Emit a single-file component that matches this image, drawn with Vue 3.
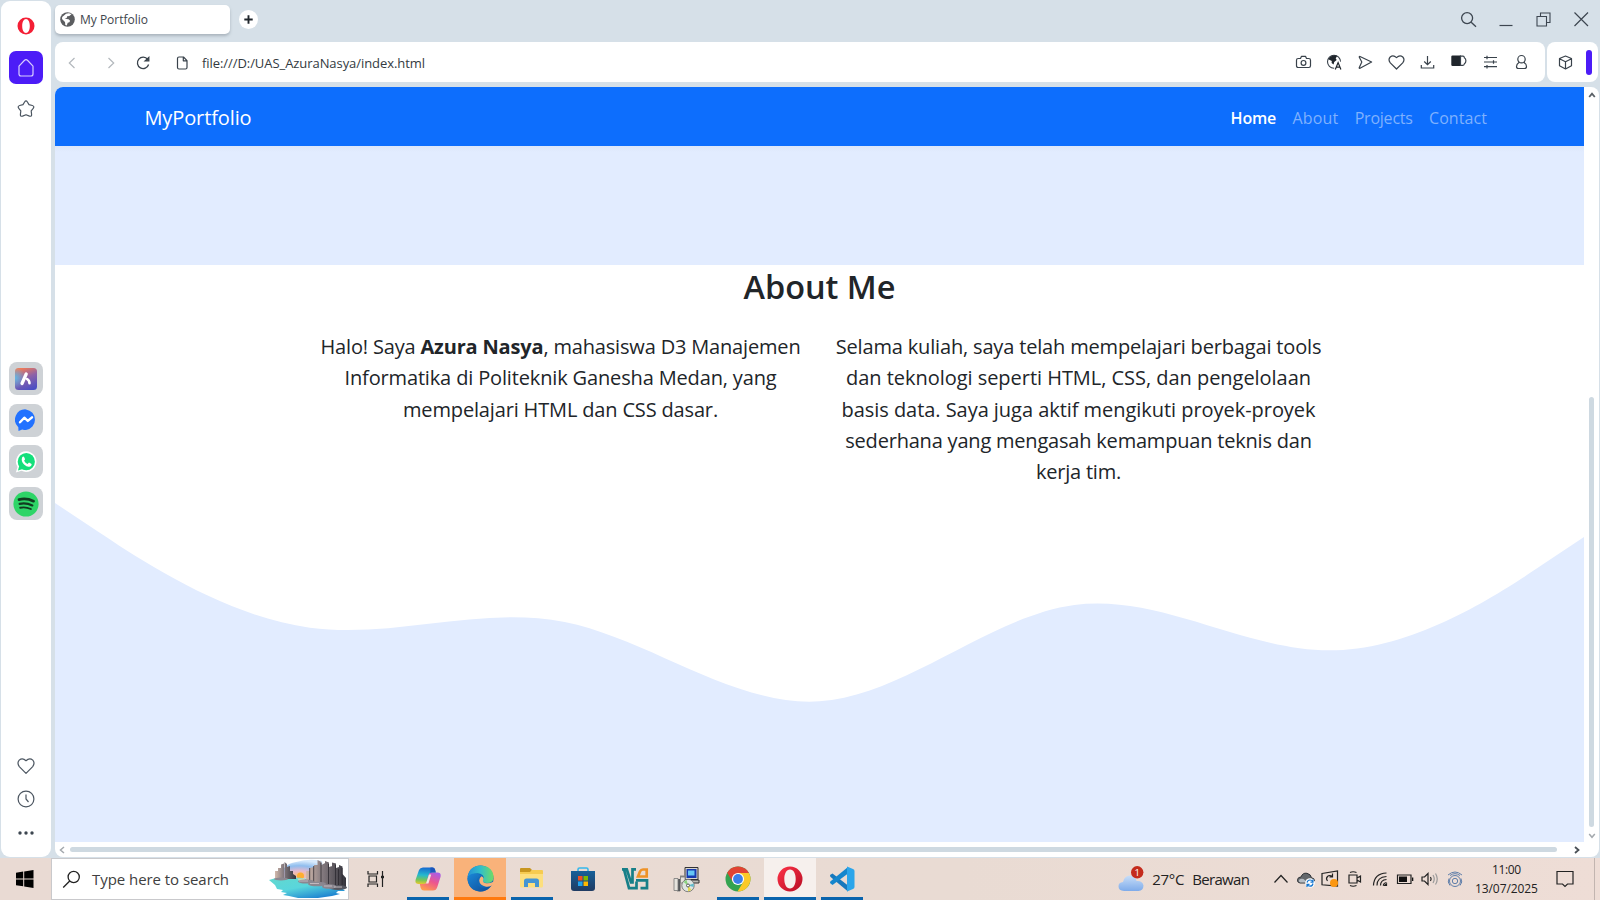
<script setup>
// Spreads a single line of text to an exact width in pixels by adjusting its letter spacing.
const vFit = {
  mounted(el, { value }) {
    const width = el.getBoundingClientRect().width
    const count = el.textContent.length
    el.style.letterSpacing = ((value - width) / count).toFixed(4) + 'px'
  }
}

const links = [
  { text: 'Home', width: 45.5, active: true },
  { text: 'About', width: 46 },
  { text: 'Projects', width: 58 },
  { text: 'Contact', width: 58 }
]

const right = [
  { text: 'Selama kuliah, saya telah mempelajari berbagai tools', width: 485.5 },
  { text: 'dan teknologi seperti HTML, CSS, dan pengelolaan', width: 465 },
  { text: 'basis data. Saya juga aktif mengikuti proyek-proyek', width: 474 },
  { text: 'sederhana yang mengasah kemampuan teknis dan', width: 466.5 },
  { text: 'kerja tim.', width: 85 }
]
</script>

<template>
  <div class="screen">
    <div class="browser">
      <aside class="side">
        <svg class="opera" width="18" height="18" viewBox="0 0 18 18"><path fill="#f41f35" fill-rule="evenodd" d="M9 .5a8.500 8.500 0 1 0 0 17 8.500 8.500 0 0 0 0-17zM9 2c2.300 0 3.800 3 3.800 7s-1.500 7-3.800 7-3.800-3-3.800-7S6.700 2 9 2z"/></svg>
        <div class="home">
          <svg width="20" height="20" viewBox="0 0 20 20" fill="none" stroke="#d8cdff" stroke-width="1.200" stroke-linejoin="round"><path d="M3 8.200 8.300 2.500q1.700-1.600 3.400 0L17 8.200v7.800q0 2-2 2H5q-2 0-2-2z"/></svg>
        </div>
        <svg class="star" width="20" height="20" viewBox="0 0 20 20" fill="none" stroke="#4b5560" stroke-width="1.200" stroke-linejoin="round"><path d="M8.600 3q1.400-2.200 2.800 0l1.600 2.600 3.300.9q2.500.8.9 2.900l-2 2.500.4 3.600q.2 2.300-2.100 1.600L10 15.700l-3.500 1.400q-2.300.7-2.100-1.600l.4-3.600-2-2.500q-1.600-2.100.9-2.900l3.300-.9z"/></svg>
        <div class="apps">
          <div class="app">
            <svg width="22" height="22" viewBox="0 0 22 22"><defs><linearGradient id="aria" x1="0.3" y1="0" x2="0.7" y2="1"><stop offset="0" stop-color="#f27b56"/><stop offset=".45" stop-color="#8d62a8"/><stop offset="1" stop-color="#4a4fc4"/></linearGradient><radialGradient id="ariaGlow" cx="0" cy=".45" r=".5"><stop offset="0" stop-color="#61b8e6"/><stop offset="1" stop-color="#61b8e6" stop-opacity="0"/></radialGradient></defs><rect width="22" height="22" rx="3.500" fill="url(#aria)"/><rect width="22" height="22" rx="3.500" fill="url(#ariaGlow)"/><path d="M11.200 6 7 15.500" stroke="#fff" stroke-width="3.300" stroke-linecap="round"/><path d="M12 11q2.500 1.500 2.500 4.300" stroke="#fff" stroke-width="2.600" stroke-linecap="round" fill="none"/></svg>
          </div>
          <div class="app">
            <svg width="22" height="22" viewBox="0 0 22 22"><path fill="#2272ff" d="M11 .4A10.400 10.400 0 0 1 11 21q-2 0-3.800-.6L3.500 22l-.2-3.800A10.300 10.300 0 0 1 11 .4z"/><path d="m5 13.300 4.300-4.600 3.500 3.200L17 8.300" fill="none" stroke="#fff" stroke-width="2.400" stroke-linecap="round" stroke-linejoin="round"/></svg>
          </div>
          <div class="app">
            <svg width="22" height="22" viewBox="0 0 22 22"><path fill="#fff" d="M11.300.3a10.300 10.300 0 1 1-4.800 19.500L.8 21.500l1.700-5.400A10.400 10.400 0 0 1 11.300.3z"/><circle cx="11.300" cy="10.700" r="8.600" fill="#14df7b"/><path fill="#14df7b" d="m3 19.400 1.300-4.800 3.500 3.500z"/><path fill="#fff" d="M7.200 6.200q1-1 1.900-.3l1 2.400-1 1.500q1.200 2.200 3.400 3.200l1.500-1.400 2.600 1.300q.2 2.300-2.500 2.800-2.300.3-5-2.200-3.500-3.500-1.900-7.300z"/></svg>
          </div>
          <div class="app">
            <svg width="26" height="26" viewBox="0 0 26 26"><circle cx="13" cy="13" r="12.600" fill="#2ed567"/><g fill="none" stroke="#123b20" stroke-linecap="round"><path d="M6 8.600q7.500-1.800 14.600 1.600" stroke-width="2.700"/><path d="M6.600 12.800q6.800-1.300 12.700 1.600" stroke-width="2.200"/><path d="M7.200 16.700q5.700-1.100 10.600 1.300" stroke-width="1.900"/></g></svg>
          </div>
        </div>
        <div class="sidefoot">
          <svg width="18" height="18" viewBox="0 0 18 18" fill="none" stroke="#4b5560" stroke-width="1.200"><path d="M9 16.300 2.300 9.600Q-.3 6 2.200 3.100 5.500.3 9 3.700q3.500-3.400 6.800-.6 2.500 2.900-.1 6.500z" stroke-linejoin="round"/></svg>
          <svg width="18" height="18" viewBox="0 0 18 18" fill="none" stroke="#4b5560" stroke-width="1.200"><circle cx="9" cy="9" r="7.900"/><path d="M9 4.500V9l2.500 3"/></svg>
          <svg width="18" height="18" viewBox="0 0 18 18" fill="#3d4650"><circle cx="3" cy="9" r="1.700"/><circle cx="9" cy="9" r="1.700"/><circle cx="15" cy="9" r="1.700"/></svg>
        </div>
      </aside>

      <div class="main">
        <div class="tabs">
          <div class="tab">
            <svg width="15" height="15" viewBox="0 0 15 15"><circle cx="7.500" cy="7.500" r="7.300" fill="#5b5d60"/><path fill="#fff" d="M6 1.800q3-1.300 5.500.5L9.300 4 7.200 4.300 6.700 6 4.600 6.800l4 .4 1.500 1.500-.7 1.500-1.700.5-.9 2.800-1.500-.5-.3-3L2 7.100 2.200 5z"/></svg>
            <span v-fit="68">My Portfolio</span>
          </div>
          <div class="plus"><svg width="9" height="9" viewBox="0 0 9 9" stroke="#20262c" stroke-width="1.900"><path d="M4.500.3v8.400M.3 4.500h8.400"/></svg></div>
          <div class="window">
            <svg width="17" height="17" viewBox="0 0 17 17" fill="none" stroke="#3d4650" stroke-width="1.300"><circle cx="7.100" cy="7.100" r="5.500"/><path d="m11.200 11.200 4.800 4.600"/></svg>
            <svg width="17" height="17" viewBox="0 0 17 17" fill="none" stroke="#3d4650" stroke-width="1.200"><path d="M1.500 14.500h13"/></svg>
            <svg width="17" height="17" viewBox="0 0 17 17" fill="none" stroke="#3d4650" stroke-width="1.100"><path d="M2 5.500h9.500V15H2zM5.500 5.500V2H15v9.500h-3.500"/></svg>
            <svg width="17" height="17" viewBox="0 0 17 17" fill="none" stroke="#3d4650" stroke-width="1.200"><path d="m1.500 1.500 13.500 13.500m0-13.500-13.500 13.500"/></svg>
          </div>
        </div>

        <div class="bars">
          <div class="address">
            <svg class="back" width="16" height="16" viewBox="0 0 16 16" fill="none" stroke="#b3b8bd" stroke-width="1.200"><path d="M10.500 3 5.300 8l5.200 5"/></svg>
            <svg class="fwd" width="16" height="16" viewBox="0 0 16 16" fill="none" stroke="#b3b8bd" stroke-width="1.200"><path d="m5.500 3 5.200 5-5.200 5"/></svg>
            <svg class="reload" width="16" height="16" viewBox="0 0 16 16" fill="none" stroke="#39424b" stroke-width="1.300"><path d="M13.600 9.500A5.700 5.700 0 1 1 12.700 4.500"/><path d="M13.800 2.500v3.300h-3.600z" fill="#39424b"/></svg>
            <svg class="file" width="14" height="16" viewBox="0 0 14 16" fill="none" stroke="#39424b" stroke-width="1.200" stroke-linejoin="round"><path d="M4 2h4.500L12 5.600v6.900q0 1.500-1.500 1.500H4q-1.500 0-1.500-1.500v-9Q2.500 2 4 2zM8.300 2v3.800H12"/></svg>
            <span v-fit="223">file:///D:/UAS_AzuraNasya/index.html</span>
            <div class="tools">
              <svg width="17" height="17" viewBox="0 0 17 17" fill="none" stroke="#39424b" stroke-width="1.200" stroke-linejoin="round"><path d="M3.200 4.500h2.300L6.500 2.300h4L11.500 4.500h2.300q1.700 0 1.700 1.700v5.600q0 1.700-1.700 1.700H3.200q-1.700 0-1.700-1.700V6.200Q1.500 4.500 3.200 4.500z"/><circle cx="8.500" cy="8.900" r="2.400"/></svg>
              <svg width="17" height="17" viewBox="0 0 17 17"><circle cx="8" cy="7.700" r="6.500" fill="#fff" stroke="#39424b" stroke-width="1.100"/><path fill="#20262c" d="M4 3q3.500-3 7.200-1.200L9.700 4.500l1 1.500-2.500 2-.6 2.600-2-1.500.2-2.100L2.300 5.200z"/><path d="M8.200 17V9l4-3.500L17 10v7z" fill="#fff"/><path d="m9.300 15.500 2.800-7 2.800 7m-4.600-2.300h3.600" fill="none" stroke="#20262c" stroke-width="1.200"/></svg>
              <svg width="17" height="17" viewBox="0 0 17 17" fill="none" stroke="#39424b" stroke-width="1.200" stroke-linejoin="round"><path d="M3 2.500 14.600 8 3 14.300q-1.200.3-.7-.9L4.800 8 2.300 3.300Q2 2.200 3 2.500z"/></svg>
              <svg width="17" height="17" viewBox="0 0 17 17" fill="none" stroke="#39424b" stroke-width="1.200" stroke-linejoin="round"><path d="M8.500 15 2.300 8.900Q-.2 5.700 2.200 3 5.300.5 8.500 3.600q3.200-3.100 6.300-.6 2.400 2.700-.1 5.900z"/></svg>
              <svg width="17" height="17" viewBox="0 0 17 17" fill="none" stroke="#39424b" stroke-width="1.200"><path d="M8.500 2v8.500m-3.300-3 3.300 3.200 3.300-3.200M2.300 11v3h12.400v-3"/></svg>
              <svg width="17" height="17" viewBox="0 0 17 17"><path fill="#20262c" d="M1.500 1.500h8.500v10.500H1.500Q.3 12 .3 10.800V2.700Q.3 1.500 1.500 1.500z"/><path d="M9.500 2.100h2.500q1.200 0 1.400 1.700 1.500.9 1.500 3t-1.500 3q-.2 1.600-1.400 1.600H9.500z" fill="none" stroke="#39424b" stroke-width="1.200"/></svg>
              <svg width="17" height="17" viewBox="0 0 17 17" fill="none" stroke="#39424b" stroke-width="1.200"><path d="M2 3.500h13M2 8h13M2 12.700h13M5 1.800v3.400M11.500 6.300v3.400M5 11v3.400"/></svg>
              <svg width="17" height="17" viewBox="0 0 17 17" fill="none" stroke="#39424b" stroke-width="1.200"><circle cx="8.500" cy="5.200" r="3.700"/><path d="M6.200 8.200Q3.500 10 3.500 12.500q0 2 2 2h6q2 0 2-2 0-2.500-2.700-4.300"/></svg>
            </div>
          </div>
          <div class="panel">
            <svg width="17" height="17" viewBox="0 0 17 17" fill="none" stroke="#39424b" stroke-width="1.200" stroke-linejoin="round"><path d="m8.500 2 6 2.500v7.300l-6 3.200-6-3.200V4.500zM2.500 4.700l6 3 6-3M8.500 7.700V15"/></svg>
            <i></i>
          </div>
        </div>

        <div class="view">
          <div class="row">
            <div class="page">
              <nav>
                <span class="brand"><span v-fit="107">MyPortfolio</span></span>
                <span v-for="l in links" :key="l.text" v-fit="l.width" class="link" :class="{ active: l.active }">{{ l.text }}</span>
              </nav>
              <div class="hero"></div>
              <section>
                <h2><span v-fit="152">About Me</span></h2>
                <div class="cols">
                  <div>
                    <p><span v-fit="480">Halo! Saya <b>Azura Nasya</b>, mahasiswa D3 Manajemen</span></p>
                    <p><span v-fit="432">Informatika di Politeknik Ganesha Medan, yang</span></p>
                    <p><span v-fit="315">mempelajari HTML dan CSS dasar.</span></p>
                  </div>
                  <div>
                    <p v-for="l in right" :key="l.text"><span v-fit="l.width">{{ l.text }}</span></p>
                  </div>
                </div>
              </section>
              <svg class="wave" viewBox="0 0 1440 320" preserveAspectRatio="none"><path fill="#e2ecff" d="M0,0L40,26.700C80,53.300,160,106.700,240,117.300C320,128,400,96,480,112C560,128,640,192,720,186.700C800,181.300,880,106.700,960,96C1040,85.300,1120,138.700,1200,138.700C1280,138.700,1360,85.300,1400,58.700L1440,32L1440,320L0,320Z"/></svg>
            </div>
            <div class="vbar">
              <svg width="8" height="6" viewBox="0 0 8 6" fill="none" stroke="#5a6066" stroke-width="1.800"><path d="m1.200 5 2.800-3.300L6.800 5"/></svg>
              <i></i>
              <svg width="8" height="6" viewBox="0 0 8 6" fill="none" stroke="#a4a9ae" stroke-width="1.500"><path d="m1.200 1 2.800 3.300L6.800 1"/></svg>
            </div>
          </div>
          <div class="hbar">
            <svg width="6" height="8" viewBox="0 0 6 8" fill="none" stroke="#a4a9ae" stroke-width="1.500"><path d="M5 1 1.500 4 5 7"/></svg>
            <i></i>
            <svg width="6" height="8" viewBox="0 0 6 8" fill="none" stroke="#4b5157" stroke-width="1.800"><path d="m1 1 3.500 3L1 7"/></svg>
          </div>
        </div>
      </div>
    </div>

    <footer class="taskbar">
      <div class="start"><svg width="18" height="18" viewBox="0 0 18 18"><path d="M0 2.700 7.200 1.600v6.800H0zM8.200 1.400 17.500 0v8.400H8.200zM0 9.400h7.200v6.800L0 15.200zM8.200 9.400h9.300V18l-9.300-1.500z"/></svg></div>
      <div class="search">
        <svg width="19" height="19" viewBox="0 0 19 19" fill="none" stroke="#222" stroke-width="1.300"><circle cx="11.700" cy="7" r="5.600"/><path d="m7.700 11-6.500 6.500"/></svg>
        <span v-fit="137">Type here to search</span>
        <svg class="city" width="80" height="40" viewBox="0 0 80 40">
          <defs>
            <radialGradient id="sky" cx=".42" cy=".8" r=".75"><stop offset="0" stop-color="#ffc07a"/><stop offset=".3" stop-color="#e5b9cf"/><stop offset=".65" stop-color="#8fbdee"/><stop offset="1" stop-color="#d8eafc"/></radialGradient>
            <linearGradient id="sea" x1="0" y1="0" x2=".7" y2="1"><stop offset="0" stop-color="#62d8cf"/><stop offset=".5" stop-color="#59d6dc"/><stop offset="1" stop-color="#1b7fd0"/></linearGradient>
            <linearGradient id="tower" x1="0" y1="0" x2="1" y2="0"><stop offset="0" stop-color="#d2b9ac"/><stop offset=".4" stop-color="#857b80"/><stop offset="1" stop-color="#33333b"/></linearGradient>
          </defs>
          <path fill="url(#sky)" d="M12 19Q14 5 28 3q14-4 26-1l4 18z"/>
          <circle cx="32.500" cy="17" r="3.500" fill="#ffae2f"/>
          <path fill="url(#sea)" d="M1 21l7-2 24-.3 24 4L79 29h-5l3 3h-7l-2 2 4 1-8 2-14 2H30l-9-2-6-1 4-2-6-1 2-2-6-1-2-4z"/>
          <path fill="#ffd9a2" d="m29 19.500 7-.2 2 2-7 .5z" opacity=".7"/>
          <g fill="url(#tower)">
            <path d="M7 12h3v8H7zM10 9h3v11h-3zM13 5.500l3-1V20h-3zM16.500 3 19 5v15h-2.500zM19 8l3-1v13h-3zM22 12h3v8h-3zM25 15l3 2v3h-3z"/>
            <path d="M38 12h4v11h-4zM42 9l4-1v15h-4zM46 6h3.500v18H46zM49.500 1l4 2v22h-4zM53.500 6l3.500-2v21h-3.500zM57 2l4 1.500V26h-4zM61 8l3-1v19h-3zM64 3.500l4 1V27h-4zM68 9l3-1v20h-3zM71 6l3.500 1.500V28H71zM74.500 15l3.500 4v9h-3.500z"/>
          </g>
          <path d="M41.700 9v13m4-15v16M53 4v20m7.500-19v20M67.500 6v20m3-16v17m3.700-18v18" stroke="#29262d" stroke-width="1" opacity=".75"/>
          <g fill="#8b8790"><ellipse cx="13" cy="20" rx="7" ry="1.500"/><ellipse cx="38" cy="22.500" rx="8" ry="2"/><ellipse cx="49" cy="25" rx="9" ry="2.300"/><ellipse cx="70" cy="28.500" rx="9" ry="2.500" fill="#55565f"/><ellipse cx="61" cy="27.500" rx="7" ry="2.300"/></g>
          <path d="M31 22h9m2 2.500h9m5 2.500h8m2 1h8" stroke="#c2b7bd" stroke-width="1.200"/>
        </svg>
      </div>
      <div class="cell view-cell"><svg width="19" height="18" viewBox="0 0 19 18" fill="none" stroke="#222" stroke-width="1.200"><path d="M2 1v3h9.500V1M2 17v-3h9.500V17M3 6h7.500v6H3zM16.500 1v16"/><path d="M15 7h3" stroke-width="2.400"/></svg></div>
      <div class="cell run">
        <svg width="26" height="26" viewBox="0 0 26 26">
          <defs>
            <linearGradient id="cpa" x1="0.3" y1="0" x2="0.2" y2="1"><stop offset="0" stop-color="#176bd0"/><stop offset=".45" stop-color="#24b9cf"/><stop offset=".75" stop-color="#76c557"/><stop offset="1" stop-color="#e8c82e"/></linearGradient>
            <linearGradient id="cpb" x1="0.8" y1="0" x2="0.3" y2="1"><stop offset="0" stop-color="#a75ce8"/><stop offset=".5" stop-color="#ed568d"/><stop offset="1" stop-color="#ff9b4d"/></linearGradient>
          </defs>
          <path fill="url(#cpa)" d="M8 1.500h9.500q2 0 2.500 2l.8 3h-4q-2 0-2.600 2l-2 7q-.7 2.500-3 2.500H3.500Q-.5 18 .7 13.500L4 4q1-2.500 4-2.500z"/>
          <path fill="url(#cpb)" d="M18 24.500H9q-2.500 0-3.300-2.500L4.800 18H9q2 0 2.700-2.300l2-7q.6-2.200 3-2.200h5.800q4 0 3 4.500L22.300 21q-1 3.500-4.300 3.500z"/>
          <path fill="#1b55bb" d="M15.500 1.500h2q2 0 2.500 2l.8 3h-4l-1.500.5z"/>
          <path fill="#f3e5df" d="M11 17.500 14 8.500h2.200l-2.800 9z"/>
        </svg>
      </div>
      <div class="cell edge">
        <svg width="27" height="27" viewBox="0 0 27 27">
          <defs>
            <linearGradient id="ea" x1="0" y1=".4" x2="1" y2=".4"><stop offset="0" stop-color="#238fd8"/><stop offset=".5" stop-color="#32bfc9"/><stop offset="1" stop-color="#70dc64"/></linearGradient>
            <linearGradient id="eb" x1="0" y1="0" x2="1" y2="1"><stop offset="0" stop-color="#1987d7"/><stop offset="1" stop-color="#104b96"/></linearGradient>
          </defs>
          <circle cx="13.500" cy="13.500" r="13" fill="#126bb9"/>
          <path fill="url(#ea)" d="M.6 12.500Q2 .5 14 .5 26 1.500 26.500 12q0 6-6.500 6-5 0-4-3.500 1.500-2.500-.5-4.500-3-2.500-8-1.200Q2.500 10 .6 12.500z"/>
          <path fill="url(#eb)" d="M.5 13.500Q2 8.500 8 8.500q4.500 0 6.500 2.500-5 1-4.800 5.500.8 6 7.300 6 4 0 7.400-2Q20 26.500 13 26.500 1.500 25.500.5 13.500z"/>
          <path fill="#f9b27a" d="M14.500 11.300q2.800 1 1.600 3.500-.8 3 3.400 3.500 3.700.2 6.900-1.500.8.600-.3 3-3.200 2.300-7 1.900-6.600-1.300-6.900-6.100.3-3 2.300-4.300z"/>
        </svg>
      </div>
      <div class="cell run">
        <svg width="25" height="24" viewBox="0 0 25 24"><path fill="#c8961e" d="M1 2q0-1 1-1h9l2 2-2 3H1z"/><path fill="#f6cb50" d="M1 5h10l2-2h10q1 0 1 1v14H1z"/><path fill="#fddf7d" d="M1 7h23v12q0 1.500-1.500 1.500h-20Q1 20.500 1 19z"/><path fill="#4595d3" d="M5 20v-6q0-2.500 2.500-2.500h10Q20 11.500 20 14v6h-4v-4H9v4z"/></svg>
      </div>
      <div class="cell">
        <svg width="26" height="26" viewBox="0 0 26 26"><defs><linearGradient id="store" x1="0" y1="0" x2="0" y2="1"><stop offset="0" stop-color="#176099"/><stop offset="1" stop-color="#203b62"/></linearGradient></defs><path d="M8 6V3.500Q8 2 9.500 2h7Q18 2 18 3.500V6" fill="none" stroke="#35b8ec" stroke-width="1.600"/><path fill="url(#store)" d="M1 5h24v17q0 3-3 3H4q-3 0-3-3z"/><path fill="#f25022" d="M8 10h4.500v4.500H8z"/><path fill="#7fba00" d="M13.500 10H18v4.500h-4.500z"/><path fill="#20a4ef" d="M8 15.500h4.500V20H8z"/><path fill="#ffb900" d="M13.500 15.500H18V20h-4.500z"/></svg>
      </div>
      <div class="cell">
        <svg width="27" height="24" viewBox="0 0 27 24" fill="none" stroke="#177f88" stroke-width="2.700"><path d="M0 2.400h4.800l4.200 13h1.500V2.400h3.500M2 2.400l5 18.700h7.500v-6.500"/><path d="M14 13.300h11v7.800h-6.500"/><path d="M16 9.500 18 4.500q1-2 3-2h3.700v7z" stroke="#ee9227"/></svg>
      </div>
      <div class="cell">
        <svg width="27" height="27" viewBox="0 0 27 27"><path fill="#d8d6cf" stroke="#333" d="M12 1.500h13v12H12z"/><path fill="#173aaf" d="M13.500 3h10v9h-10z"/><path fill="#65c7f5" d="M15 4.500h6.500v5H15z"/><path fill="#bbb9b3" stroke="#333" d="M15 14h11v3H15z"/><path fill="#8a8a88" d="M7 9.500h4V13H7zM4 24.500h3v1H4z"/><path fill="#55585a" d="M5 13h2.500v12H5z"/><path fill="#e6e3dd" stroke="#777" stroke-width=".8" d="M1 12.500h4v12H1zM7.500 11h4.500v6H7.500z"/><circle cx="15" cy="19.500" r="6.200" fill="#dfe6e1" stroke="#666" stroke-width=".8"/><path fill="#8bd37e" d="m15 19.500-4.500-3.500 3-2.300z"/><path fill="#e6d84f" d="m15 19.500 3.500 4.500-3.500 1.500z"/><path fill="#60baca" d="m15 19.500 5.700-2v3.500z"/><circle cx="15" cy="19.500" r="1.500" fill="#fff" stroke="#555"/></svg>
      </div>
      <div class="cell run">
        <svg width="26" height="26" viewBox="0 0 26 26"><circle cx="13" cy="13" r="12.500" fill="#34a350"/><path fill="#e14333" d="M2.200 6.800A12.500 12.500 0 0 1 23.900 7H13L7.800 16z"/><path fill="#fbc928" d="M23.900 7A12.500 12.500 0 0 1 12.500 25.500L18.200 16 13 7z"/><circle cx="13" cy="13" r="6.100" fill="#fff"/><circle cx="13" cy="13" r="4.900" fill="#3c7ee9"/></svg>
      </div>
      <div class="cell current">
        <svg width="26" height="26" viewBox="0 0 26 26"><defs><linearGradient id="op" x1="0" y1="0" x2="1" y2="1"><stop offset="0" stop-color="#ff3348"/><stop offset="1" stop-color="#b60d24"/></linearGradient></defs><path fill="url(#op)" fill-rule="evenodd" d="M13 .5a12.500 12.500 0 1 0 0 25 12.500 12.500 0 0 0 0-25zM13 3.500c3.600 0 5.700 4.200 5.700 9.500S16.600 22.500 13 22.500 7.300 18.300 7.300 13 9.400 3.500 13 3.500z"/></svg>
      </div>
      <div class="cell run">
        <svg width="26" height="26" viewBox="0 0 26 26"><path fill="#1678bd" d="m1 9 2.500-1.500L19 19.500v6L1.300 10.700z"/><path fill="#1486cd" d="m1 17 2.500 2L19 7.500V1L1.300 15.500z"/><path fill="#2ba5ea" d="m18 .5 6 2.500q1.500.6 1.500 2v16q0 1.400-1.500 2l-6 2.500z"/></svg>
      </div>

      <div class="weather">
        <svg width="26" height="26" viewBox="0 0 26 26"><defs><linearGradient id="cl" x1="0" y1="0" x2="0" y2="1"><stop offset="0" stop-color="#c8def8"/><stop offset="1" stop-color="#7eabea"/></linearGradient></defs><path fill="url(#cl)" d="M6 25q-5.500-.2-5.500-4.700 0-4 4.500-4.300Q6.500 9.500 12 9.500T18.500 15q6-.7 7 4.500-.2 5.300-5 5.500z"/><circle cx="19.200" cy="6.300" r="6.200" fill="#c42b1c"/><text x="19.200" y="9.800" text-anchor="middle" fill="#fff" font-size="9.500">1</text></svg>
        <span v-fit="32">27°C</span>
        <span v-fit="57">Berawan</span>
      </div>
      <div class="tray">
        <svg width="20" height="20" viewBox="0 0 20 20" fill="none" stroke="#222" stroke-width="1.200"><path d="m3.500 13.500 6.500-7 6.500 7"/></svg>
        <svg width="20" height="20" viewBox="0 0 20 20"><path fill="#64686c" stroke="#303438" d="M4 14Q1 13.500 1.500 10.500 2 8 5 8q1.500-4.500 6-3.700 4 1 4.500 4.500 3 .2 3 3.200l-5 2z"/><path fill="#b8bec4" d="M2.500 12q1-3 5-2l4 3.500H4z"/><circle cx="14" cy="14" r="4.800" fill="#fff"/><path d="M11 13.500q.7-2.500 3-2.500 2 0 3 1.700m0 1.800q-.6 2.700-3 2.700-2 0-3-1.700m6-5v2.700h-2.500M11 18v-2.700h2.500" fill="none" stroke="#1676cf" stroke-width="1.200"/></svg>
        <svg width="20" height="20" viewBox="0 0 20 20" fill="none" stroke="#222" stroke-width="1.200"><path d="M2 4.500 17.500 2v15L2 15.800z"/><path d="M12.500 7.500q-3-2-5 0t0 4.500M12.500 4.500v3.300H9.500"/><circle cx="14" cy="14" r="4" fill="#fb9712" stroke="none"/></svg>
        <svg width="20" height="20" viewBox="0 0 20 20" fill="none" stroke="#222" stroke-width="1.200"><path d="M4 6h8v8H4zM12 9l3.500-2v6L12 11M5 3.500Q8 2 11.500 3.500m-6.500 13q3 1.500 6.500 0"/></svg>
        <svg width="20" height="20" viewBox="0 0 20 20" fill="none" stroke="#222" stroke-width="1.200"><path d="M3.500 16.500Q4 4.500 16.500 4M7 16.500Q7 8 16.500 7.500M10.500 16.500q0-5.500 6-6M13.300 16.500q.2-2.500 3.200-3"/><path d="M14.500 16.500h2V15z" fill="#222"/></svg>
        <svg width="20" height="20" viewBox="0 0 20 20"><path d="M2.500 6h13.500v8.500H2.500z" fill="none" stroke="#222" stroke-width="1.200"/><path d="M4 7.500h8v5.500H4zM17 8.500h1.300V12H17z" fill="#111"/></svg>
        <svg width="20" height="20" viewBox="0 0 20 20" fill="none" stroke="#222" stroke-width="1.200"><path d="M2 8h2.500L8 4.500v11L4.500 12H2zM10.500 8q1.300 2 0 4"/><path d="M13 6q2.500 4 0 8M15.500 4.500q3.500 5.500 0 11" stroke="#999"/></svg>
        <svg width="20" height="20" viewBox="0 0 20 20" fill="none" stroke="#607faa" stroke-width="1"><circle cx="10" cy="12" r="5.500"/><circle cx="10" cy="12" r="2.700"/><path d="M3 6q7-6 14 0M5 6.500q5-3.700 10 0M4 9.500Q2 13 5 16.500m11-7q2 3.500-1 7"/></svg>
      </div>
      <div class="clock"><span v-fit="29">11:00</span><span v-fit="63">13/07/2025</span></div>
      <svg class="note" width="18" height="18" viewBox="0 0 18 18" fill="none" stroke="#222" stroke-width="1.200"><path d="M1 1.500h16v12.500h-5.500L9 16.500 6.500 14H1z"/></svg>
      <i class="desk"></i>
    </footer>
  </div>
</template>

<style>
body { margin: 0; overflow: hidden; }
</style>

<style scoped>
* { box-sizing: border-box; }
.screen { width: 1600px; height: 900px; display: flex; flex-direction: column; font-family: "Open Sans", "Noto Sans", sans-serif; background: #d6e0e8; color: #222; overflow: hidden; }
svg { display: block; flex: none; }
span { white-space: nowrap; flex: none; }
.browser { height: 858px; flex: none; display: flex; gap: 4px; padding-left: 1px; }
.side { width: 50px; margin: 1px 0; background: #fff; border-radius: 9px; display: flex; flex-direction: column; align-items: center; flex: none; }
.opera { margin-top: 16px; }
.home { width: 34px; height: 33px; margin-top: 16px; border-radius: 7px; background: #4c1cf7; display: grid; place-items: center; }
.star { margin-top: 15px; }
.apps { margin-top: 243px; display: flex; flex-direction: column; gap: 8.700px; }
.app { width: 33.500px; height: 33px; border-radius: 8px; background: #ced2d6; display: grid; place-items: center; }
.sidefoot { margin-top: 236.500px; display: flex; flex-direction: column; gap: 15.600px; }
.main { width: 1545px; flex: none; }
.tabs { height: 42px; display: flex; padding-top: 5px; align-items: flex-start; }
.tab { width: 175px; height: 29px; background: #fff; border-radius: 5px; display: flex; align-items: center; padding-left: 5px; gap: 5px; box-shadow: 0 2px 3px #8d97a199; font-size: 12px; color: #3e454c; }
.plus { width: 19px; height: 19px; border-radius: 50%; background: #fff; display: grid; place-items: center; margin: 5px 0 0 9px; }
.window { margin: 6px 10px 0 auto; display: flex; gap: 20.600px; }
.bars { display: flex; height: 40px; gap: 2px; }
.address { width: 1490px; background: #fff; border-radius: 8px; display: flex; align-items: center; font-size: 13px; color: #333a41; padding-top: 1px; }
.back { margin-left: 9px; }
.fwd { margin-left: 23px; }
.reload { margin-left: 16px; }
.file { margin: 0 13px 0 24px; }
.tools { margin: 0 15px 0 auto; display: flex; gap: 14.200px; }
.panel { width: 51px; background: #fff; border-radius: 8px; display: flex; align-items: center; padding: 1px 0 0 10px; gap: 12px; }
.panel i { width: 6px; height: 25px; border-radius: 3px; background: #4c1cf7; }
.view { margin-top: 5px; width: 1544px; height: 770px; background: #fff; border-radius: 8px; overflow: hidden; }
.row { display: flex; height: 755px; }
.page { width: 1529px; height: 755px; overflow: hidden; background: #fff; display: flex; flex-direction: column; }
nav { height: 59px; flex: none; background: #0d6efd; display: flex; align-items: center; padding: 2px 97px 0 89.500px; gap: 16.300px; font-size: 16px; color: #fff; }
.brand { margin-right: auto; font-size: 20px; }
.link { color: #7fb1fe; font-weight: 500; }
.active { color: #fff; font-weight: 600; }
.hero { height: 119px; flex: none; background: linear-gradient(#dce7fa, #e2ecff 6px); }
section { height: 238px; flex: none; color: #212529; }
h2 { margin: 0; height: 43px; line-height: 43px; font-size: 32.500px; font-weight: 600; text-align: center; }
.cols { display: grid; grid-template-columns: 518px 518px; justify-content: center; margin-top: 23px; }
p { margin: 0; height: 31.250px; line-height: 31.250px; font-size: 20px; text-align: center; }
.wave { width: 1529px; height: 340px; }
h2 span, p span, .brand span { display: inline-block; }
.vbar { width: 15px; display: flex; flex-direction: column; align-items: center; padding-top: 5px; }
.vbar i { width: 5px; height: 430px; margin: 299px 0 6px; border-radius: 3px; background: #ced9e1; }
.hbar { height: 15px; display: flex; align-items: center; padding-left: 4px; }
.hbar i { width: 1487px; height: 5px; margin: 0 17px 0 5px; border-radius: 3px; background: #ced9e1; }
.taskbar { height: 42px; flex: none; display: flex; background: linear-gradient(90deg, #e9dad3, #e9dbd3 60%, #eeddd6); }
.start { width: 51px; display: grid; place-items: center; padding-right: 1px; }
.search { width: 298px; background: #fff; border: 1px solid #c9c9cc; display: flex; align-items: center; padding-left: 10px; font-size: 15px; color: #404040; flex: none; }
.search span { margin-left: 11px; }
.city { margin-left: 39px; }
.cell { width: 51.700px; display: grid; place-items: center; flex: none; }
.view-cell { width: 53.500px; }
.run { background: linear-gradient(#0a64ad, #0a64ad) 50% 100% / 42px 3px no-repeat; }
.edge { background: #f9b27a; border-bottom: 3px solid #ff7a0f; padding-top: 2px; }
.current { background: #f6f0ed; border-bottom: 3px solid #0a64ad; padding-top: 3px; }
.weather { margin-left: 250.500px; display: flex; align-items: center; gap: 8px; font-size: 15px; flex: none; }
.weather svg { margin-top: -1px; }
.tray { margin-left: 21.500px; display: flex; align-items: center; gap: 4.900px; flex: none; }
.clock { margin-left: 10px; width: 63px; display: flex; flex-direction: column; align-items: center; font-size: 12px; line-height: 19px; padding-top: 2px; flex: none; }
.note { margin: 12px 0 0 18px; }
.desk { margin-left: 20px; width: 1px; background: #c2b5b0; }
</style>
